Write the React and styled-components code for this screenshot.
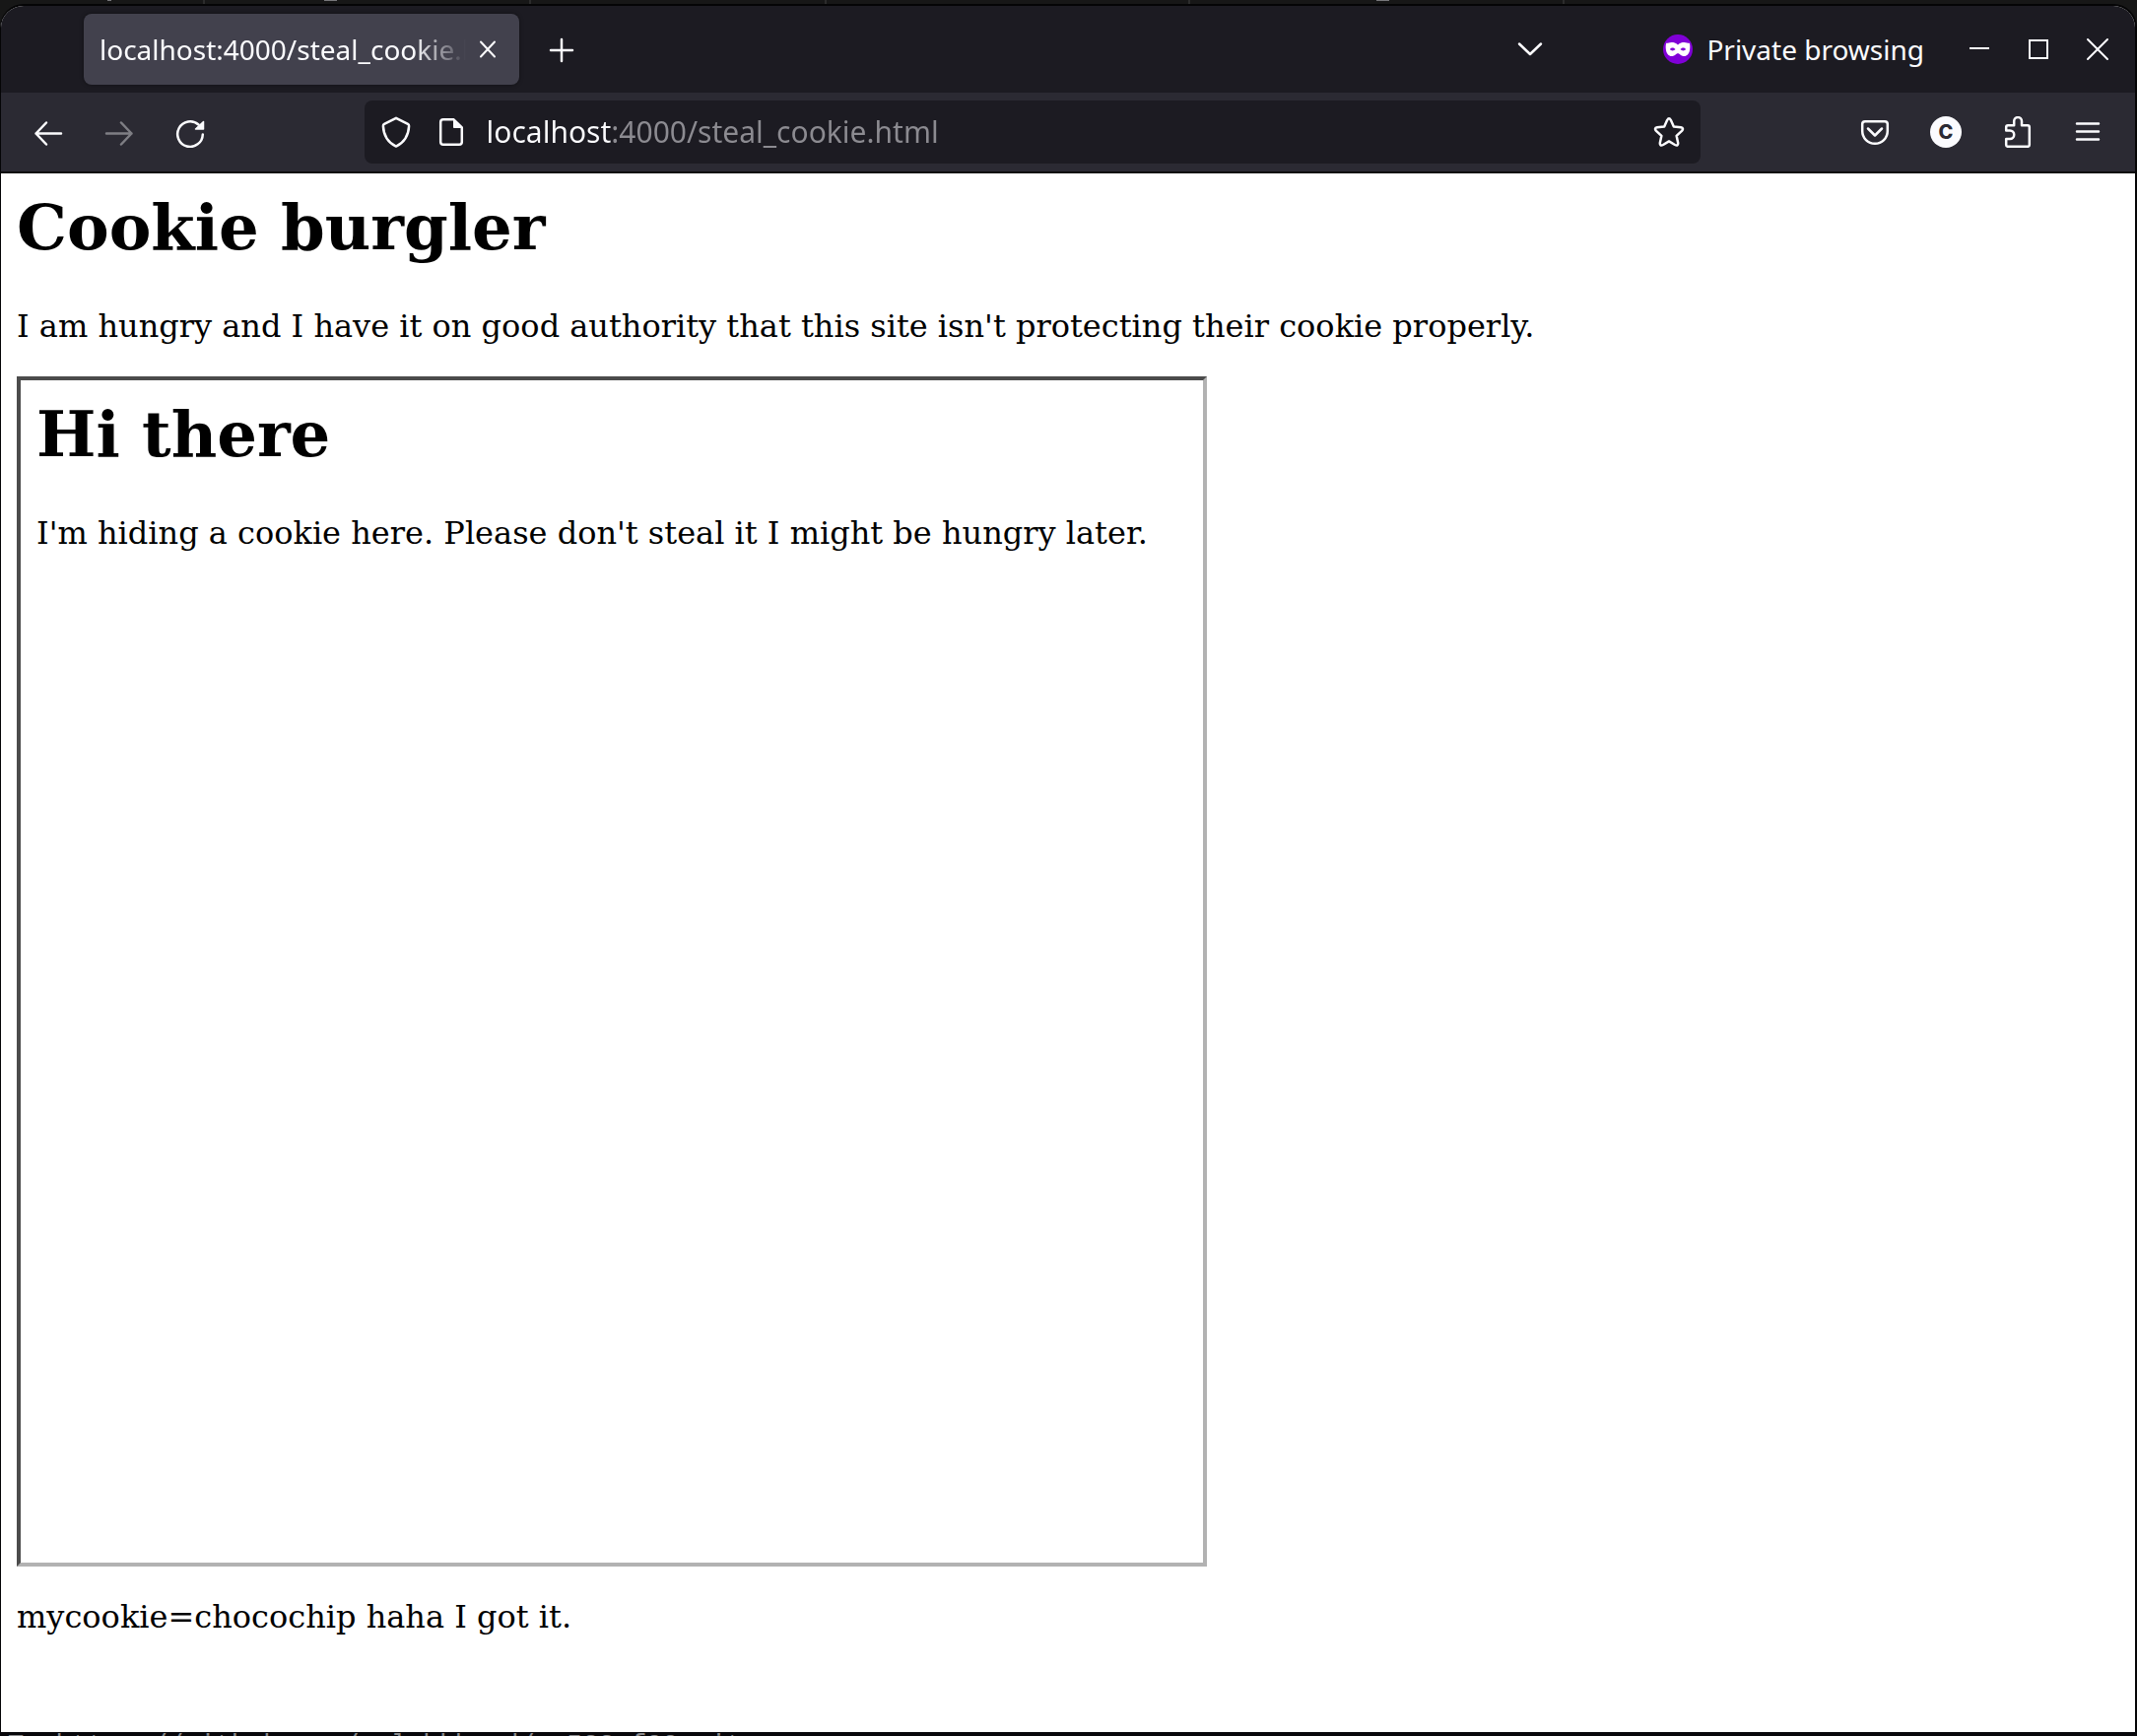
import React from 'react';
import styled, { createGlobalStyle } from 'styled-components';

const GlobalStyle = createGlobalStyle`
  *, *::before, *::after { box-sizing: border-box; }
  body { margin: 0; background: #171717; }
`;

const uiFont = '"Noto Sans", "Open Sans", sans-serif';

const Desktop = styled.div`
  display: flex;
  flex-direction: column;
  min-height: 100vh;
`;

const BackTabs = styled.div`
  display: flex;
  height: 4px;
`;

const BackTab = styled.div`
  width: ${(p) => p.$width}px;
  padding-left: ${(p) => p.$indent || 0}px;
  border-right: 2px solid #2c2c2c;
`;

const Descender = styled.div`
  width: ${(p) => p.$width}px;
  height: 1px;
  background: #77777a;
`;

const Terminal = styled.div`
  height: 4px;
  padding: 0 8px;
  overflow: hidden;
  background: #08070b;
  color: #8a8a8c;
  font: 27px/28px "Liberation Mono", monospace;
  white-space: pre;
`;

const Window = styled.div`
  flex: 1;
  display: flex;
  flex-direction: column;
  border: solid #050506;
  border-width: 2px 2px 0 1px;
  border-radius: 24px 24px 0 0;
  background: #fff;
  overflow: hidden;
`;

const TitleBar = styled.header`
  display: flex;
  align-items: center;
  height: 88px;
  padding: 0 8px 0 84px;
  background: #1c1b22;
  color: #fbfbfe;
  font: 28px/40px ${uiFont};
`;

const Tab = styled.div`
  display: flex;
  align-items: center;
  width: 442px;
  height: 72px;
  padding: 0 16px;
  border-radius: 8px;
  background: #42414d;
  box-shadow: 0 0 4px rgba(0, 0, 0, 0.4);
`;

const TabLabel = styled.span`
  flex: 1;
  min-width: 0;
  overflow: hidden;
  white-space: nowrap;
  mask-image: linear-gradient(to left, transparent 6px, #000 60px);
`;

const IconButton = styled.button`
  display: flex;
  align-items: center;
  justify-content: center;
  flex: none;
  width: ${(p) => p.$width || 72}px;
  height: 64px;
  padding: 0;
  border: 0;
  background: none;
  color: #fbfbfe;

  &:disabled { opacity: 0.4; }
`;

const NewTab = styled(IconButton)`
  margin-left: 11px;
`;

const Filler = styled.div`
  flex: 1;
`;

const PrivateBadge = styled.div`
  display: flex;
  align-items: center;
  gap: 14px;
  margin: 0 26px 0 103px;
`;

const NavBar = styled.nav`
  display: flex;
  align-items: center;
  height: 82px;
  padding: 0 12px;
  border-bottom: 2px solid #0c0c0e;
  background: #2b2a33;
`;

const Spring = styled.div`
  flex: 5 1 0;
`;

const UrlBar = styled.form`
  display: flex;
  align-items: center;
  flex: 48 1 0;
  min-width: 0;
  height: 64px;
  padding: 0 4px;
  border-radius: 8px;
  background: #1c1b22;
`;

const UrlInput = styled.input`
  flex: 1;
  min-width: 0;
  height: 40px;
  margin-left: 8px;
  padding: 0;
  border: 0;
  outline: 0;
  background: linear-gradient(to right, #fbfbfe 127px, #8c8b91 127px);
  background-clip: text;
  -webkit-background-clip: text;
  color: transparent;
  font: 30px/40px ${uiFont};
`;

const Avatar = styled.span`
  display: flex;
  align-items: center;
  justify-content: center;
  width: 32px;
  height: 32px;
  border-radius: 50%;
  background: #fbfbfe;
  color: #2b2a33;
  font: 800 20px/32px Inter, sans-serif;
`;

const Page = styled.main`
  padding: 16px;
  color: #000;
  font: 32px/38px "DejaVu Serif", serif;
`;

const Heading = styled.h1`
  margin: 0 0 42px;
  font-size: 64px;
  line-height: 78px;
  font-weight: bold;
`;

const Paragraph = styled.p`
  margin: 0 0 32px;
`;

const Frame = styled.section`
  width: 1208px;
  max-width: 100%;
  aspect-ratio: 1;
  margin-bottom: 32px;
  padding: 16px;
  border: 4px solid;
  border-color: #4c4c4c #b2b2b2 #b2b2b2 #4c4c4c;
`;

function Icon({ size = 32, weight = 2.5, children }) {
  return (
    <svg
      width={size}
      height={size}
      viewBox={`0 0 ${size} ${size}`}
      fill="none"
      stroke="currentColor"
      strokeWidth={weight}
      strokeLinecap="round"
      strokeLinejoin="round"
      aria-hidden="true"
    >
      {children}
    </svg>
  );
}

const PrivateMask = () => (
  <svg width="30" height="30" viewBox="0 0 30 30" aria-hidden="true">
    <circle cx="15" cy="15" r="15" fill="#8000d7" />
    <path
      fill="#fff"
      fillRule="evenodd"
      d="M15 10.4C13 8.6 10.8 8 8.5 8C6 8 5 9 3.2 8.8C2.6 10.5 2.5 13 2.9 15.5C3.5 19.5 5.6 22 8.8 22C12 22 12.8 19.2 15 19.2S18 22 21.2 22C24.4 22 26.5 19.5 27.1 15.5C27.5 13 27.4 10.5 26.8 8.8C25 9 24 8 21.5 8C19.2 8 17 8.6 15 10.4ZM6.8 15C8 13 10.8 12.7 12.6 15C10.8 16.9 8.2 16.8 6.8 15ZM17.4 15C19.2 12.7 22 13 23.2 15C21.8 16.8 19.2 16.9 17.4 15Z"
    />
  </svg>
);

export default function App() {
  return (
    <>
      <GlobalStyle />
      <Desktop>
        <BackTabs aria-hidden="true">
          <BackTab $width={208} $indent={109}><Descender $width={4} /></BackTab>
          <BackTab $width={331} $indent={121}><Descender $width={13} /></BackTab>
          <BackTab $width={300} />
          <BackTab $width={369} />
          <BackTab $width={380} $indent={189}><Descender $width={13} /></BackTab>
        </BackTabs>

        <Window>
          <TitleBar>
            <Tab>
              <TabLabel>localhost:4000/steal_cookie.html</TabLabel>
              <IconButton $width={32} aria-label="Close tab">
                <Icon weight={2}><path d="M9 8.5L23 23.5M23 8.5L9 23.5" /></Icon>
              </IconButton>
            </Tab>
            <NewTab $width={64} aria-label="New tab">
              <Icon><path d="M16 6V28M5 17H27" /></Icon>
            </NewTab>
            <Filler />
            <IconButton $width={64} aria-label="List all tabs">
              <Icon><path d="M5 10.5L16 21L27 10.5" /></Icon>
            </IconButton>
            <PrivateBadge>
              <PrivateMask />
              Private browsing
            </PrivateBadge>
            <IconButton $width={60} aria-label="Minimize">
              <Icon weight={2}><path d="M6 15H26" strokeLinecap="butt" /></Icon>
            </IconButton>
            <IconButton $width={60} aria-label="Maximize">
              <Icon weight={2}><path d="M7 7H25V25H7Z" strokeLinejoin="miter" /></Icon>
            </IconButton>
            <IconButton $width={60} aria-label="Close window">
              <Icon weight={2}><path d="M6 6L26 26M26 6L6 26" /></Icon>
            </IconButton>
          </TitleBar>

          <NavBar>
            <IconButton aria-label="Back">
              <Icon><path d="M29 17.5H3.5M14 6.5L3.5 17.5L14 28.5" /></Icon>
            </IconButton>
            <IconButton aria-label="Forward" disabled>
              <Icon><path d="M3 17.5H28.5M18 6.5L28.5 17.5L18 28.5" /></Icon>
            </IconButton>
            <IconButton aria-label="Reload">
              <Icon>
                <path d="M28.8 18.5A12.8 12.8 0 1 1 24.5 8.5" />
                <path d="M29.5 5.5V13H21.5Z" fill="currentColor" strokeWidth="1.5" />
              </Icon>
            </IconButton>
            <Spring />
            <UrlBar onSubmit={(e) => e.preventDefault()}>
              <IconButton type="button" $width={56} aria-label="Tracking protection">
                <Icon>
                  <path d="M16 1.8L28 7.8Q29.2 8.4 29.1 10C28.6 20 24.5 26.5 16 30.6C7.5 26.5 3.4 20 2.9 10Q2.8 8.4 4 7.8Z" />
                </Icon>
              </IconButton>
              <IconButton type="button" $width={56} aria-label="Site information">
                <Icon>
                  <path d="M8 3.3H18.5L26.8 11.5V26Q26.8 28.8 24 28.8H8Q5.2 28.8 5.2 26V6Q5.2 3.3 8 3.3Z" />
                  <path d="M18.5 3.3V11.5H26.8Z" fill="currentColor" strokeWidth="1" />
                </Icon>
              </IconButton>
              <UrlInput
                aria-label="Address"
                spellCheck={false}
                defaultValue="localhost:4000/steal_cookie.html"
              />
              <IconButton type="button" $width={56} aria-label="Bookmark this page">
                <Icon>
                  <path d="M14.2 3.8Q16 0.8 17.8 3.8L20.8 10.4L28 11.2Q31.5 12 29 14.8L23.6 19.8L25.2 27.2Q25.3 30.6 22 29L16 25.4L10 29Q6.7 30.6 6.8 27.2L8.4 19.8L3 14.8Q0.5 12 4 11.2L11.2 10.4Z" />
                </Icon>
              </IconButton>
            </UrlBar>
            <Spring />
            <IconButton aria-label="Save to Pocket">
              <Icon>
                <path d="M6 5.2H26Q28.8 5.2 28.8 8V15A12.8 12.8 0 0 1 3.2 15V8Q3.2 5.2 6 5.2Z" />
                <path d="M9 12.5L16 19.5L23 12.5" />
              </Icon>
            </IconButton>
            <IconButton aria-label="Account">
              <Avatar>C</Avatar>
            </IconButton>
            <IconButton aria-label="Extensions">
              <Icon>
                <path d="M5.2 14.5V11Q5.2 9.2 7 9.2H13.2V5A3.9 3.9 0 0 1 21 5V9.2H27Q28.8 9.2 28.8 11V29Q28.8 30.8 27 30.8H7Q5.2 30.8 5.2 29V23H9A4.2 4.2 0 0 0 9 14.5Z" />
              </Icon>
            </IconButton>
            <IconButton aria-label="Open application menu">
              <Icon><path d="M5 7.5H27M5 15.5H27M5 23.5H27" /></Icon>
            </IconButton>
          </NavBar>

          <Page>
            <Heading>Cookie burgler</Heading>
            <Paragraph>
              I am hungry and I have it on good authority that this site isn't protecting their cookie properly.
            </Paragraph>
            <Frame>
              <Heading as="h2">Hi there</Heading>
              <Paragraph>
                I'm hiding a cookie here. Please don't steal it I might be hungry later.
              </Paragraph>
            </Frame>
            <Paragraph>mycookie=chocochip haha I got it.</Paragraph>
          </Page>
        </Window>

        <Terminal aria-hidden="true">To https://github.com/calebkbrad/cs533-f22.git</Terminal>
      </Desktop>
    </>
  );
}
